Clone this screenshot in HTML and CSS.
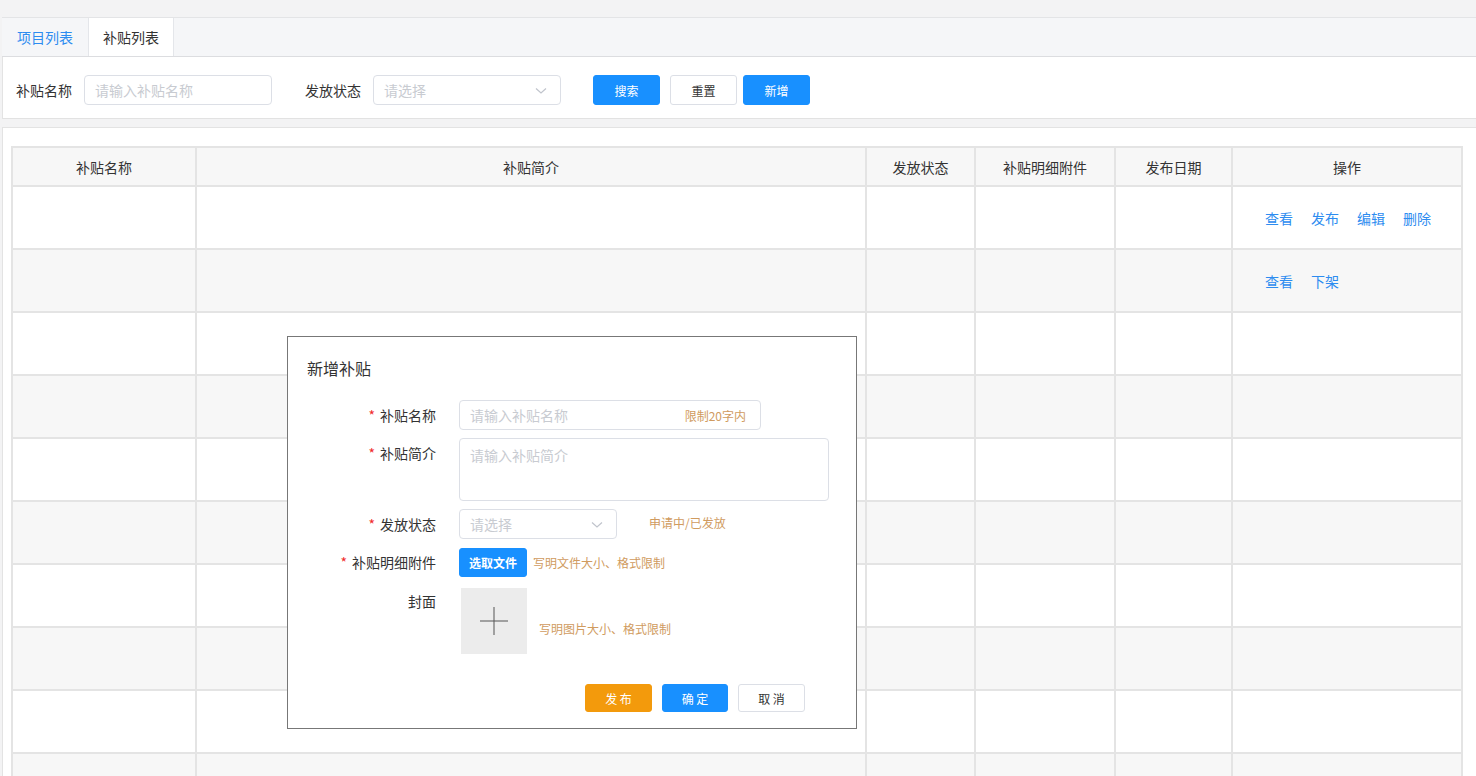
FILE: index.html
```html
<!DOCTYPE html>
<html lang="zh">
<head>
<meta charset="utf-8">
<title>补贴列表</title>
<link rel="stylesheet" href="styles.css">
</head>
<body>
<div class="page">
  <div class="tabs">
    <div class="tab tab-link">项目列表</div>
    <div class="tab tab-active">补贴列表</div>
  </div>

  <div class="search-panel">
    <span class="s-label">补贴名称</span>
    <div class="s-input"><span class="ph">请输入补贴名称</span></div>
    <span class="s-label s-label-2">发放状态</span>
    <div class="s-input s-select"><span class="ph">请选择</span>
      <svg class="chev" width="12" height="8" viewBox="0 0 12 8"><polyline points="1,1.5 6,6 11,1.5" fill="none" stroke="#c0c4cc" stroke-width="1.2"/></svg>
    </div>
    <div class="btns">
      <button class="btn btn-blue">搜索</button>
      <button class="btn btn-white">重置</button>
      <button class="btn btn-blue btn-add">新增</button>
    </div>
  </div>

  <div class="table-panel">
    <table class="grid">
      <colgroup>
        <col class="c1"><col class="c2"><col class="c3"><col class="c4"><col class="c5"><col class="c6">
      </colgroup>
      <thead>
        <tr><th>补贴名称</th><th>补贴简介</th><th>发放状态</th><th>补贴明细附件</th><th>发布日期</th><th>操作</th></tr>
      </thead>
      <tbody>
        <tr><td></td><td></td><td></td><td></td><td></td><td class="ops"><a>查看</a><a>发布</a><a>编辑</a><a>删除</a></td></tr>
        <tr><td></td><td></td><td></td><td></td><td></td><td class="ops"><a>查看</a><a>下架</a></td></tr>
        <tr><td></td><td></td><td></td><td></td><td></td><td></td></tr>
        <tr><td></td><td></td><td></td><td></td><td></td><td></td></tr>
        <tr><td></td><td></td><td></td><td></td><td></td><td></td></tr>
        <tr><td></td><td></td><td></td><td></td><td></td><td></td></tr>
        <tr><td></td><td></td><td></td><td></td><td></td><td></td></tr>
        <tr><td></td><td></td><td></td><td></td><td></td><td></td></tr>
        <tr><td></td><td></td><td></td><td></td><td></td><td></td></tr>
        <tr><td></td><td></td><td></td><td></td><td></td><td></td></tr>
      </tbody>
    </table>
  </div>

  <div class="modal">
    <div class="m-title">新增补贴</div>
    <div class="form">
      <div class="f-row">
        <label class="f-label"><span class="req">*</span>补贴名称</label>
        <div class="f-input f-name"><span class="ph">请输入补贴名称</span><span class="suffix">限制20字内</span></div>
      </div>
      <div class="f-row">
        <label class="f-label"><span class="req">*</span>补贴简介</label>
        <div class="f-textarea"><span class="ph">请输入补贴简介</span></div>
      </div>
      <div class="f-row">
        <label class="f-label"><span class="req">*</span>发放状态</label>
        <div class="f-input f-select"><span class="ph">请选择</span>
          <svg class="chev" width="12" height="8" viewBox="0 0 12 8"><polyline points="1,1.5 6,6 11,1.5" fill="none" stroke="#c0c4cc" stroke-width="1.2"/></svg>
        </div>
        <span class="hint hint-status">申请中/已发放</span>
      </div>
      <div class="f-row f-row-file">
        <label class="f-label"><span class="req">*</span>补贴明细附件</label>
        <button class="btn btn-blue btn-file">选取文件</button>
        <span class="hint hint-file">写明文件大小、格式限制</span>
      </div>
      <div class="f-row f-row-cover">
        <label class="f-label f-label-cover">封面</label>
        <div class="upload">
          <svg width="30" height="30" viewBox="0 0 30 30"><line x1="1" y1="15" x2="29" y2="15" stroke="#555" stroke-width="1"/><line x1="15" y1="1" x2="15" y2="29" stroke="#555" stroke-width="1"/></svg>
        </div>
        <span class="hint hint-cover">写明图片大小、格式限制</span>
      </div>
    </div>
    <div class="m-footer">
      <button class="btn btn-orange">发 布</button>
      <button class="btn btn-blue">确 定</button>
      <button class="btn btn-white">取 消</button>
    </div>
  </div>
</div>
</body>
</html>
```

FILE: styles.css
```css
html, body {
  margin: 0;
  padding: 0;
  overflow: hidden;
}
body {
  background: #f3f3f4;
  font-family: "Noto Sans CJK SC", "Noto Sans", sans-serif;
  color: #333;
  font-size: 14px;
}
.page {
  position: relative;
  width: 1476px;
  height: 776px;
  padding-top: 17px;
  box-sizing: border-box;
}

/* tabs */
.tabs {
  display: flex;
  height: 38px;
  margin-left: 2px;
  background: #f5f6f8;
  border-top: 1px solid #e3e4e6;
  border-bottom: 1px solid #dcdde0;
}
.tab {
  width: 86px;
  display: flex;
  align-items: center;
  justify-content: center;
  font-size: 14px;
  box-sizing: border-box;
}
.tab-link { color: #2d8cf0; }
.tab-active {
  background: #fff;
  color: #333;
  border-left: 1px solid #e4e6ea;
  border-right: 1px solid #e4e6ea;
}

/* search panel */
.search-panel {
  display: flex;
  align-items: flex-start;
  height: 62px;
  margin-left: 2px;
  padding: 18px 0 0 13px;
  background: #fff;
  border-left: 1px solid #e3e3e3;
  border-bottom: 1px solid #e2e2e2;
  box-sizing: border-box;
}
.s-label { font-size: 14px; color: #333; margin-right: 12px; line-height: 30px; }
.s-label-2 { margin-left: 33px; }
.s-input {
  position: relative;
  width: 188px;
  height: 30px;
  border: 1px solid #dcdfe6;
  border-radius: 4px;
  box-sizing: border-box;
  display: flex;
  align-items: center;
  padding-left: 10px;
}
.ph { color: #c8cbd1; font-size: 14px; }
.chev { position: absolute; right: 13px; top: 11px; }
.btns { display: flex; margin-left: 32px; }
.btn {
  height: 30px;
  width: 67px;
  border-radius: 3px;
  font-family: "Noto Sans CJK SC", "Noto Sans", sans-serif;
  font-size: 12px;
  border: 1px solid transparent;
  padding: 0;
  box-sizing: border-box;
  cursor: pointer;
}
.btn-blue { background: #1890ff; color: #fff; border-color: #1890ff; }
.btn-white { background: #fff; color: #333; border-color: #dcdfe6; margin-left: 10px; }
.btn-add { margin-left: 6px; }
.btn-orange { background: #f39a0c; color: #fff; border-color: #f39a0c; }

/* table panel */
.table-panel {
  margin-top: 8px;
  margin-left: 2px;
  padding: 18px 0 0 8px;
  background: #fff;
  border-top: 1px solid #e3e3e3;
  border-left: 1px solid #e3e3e3;
  height: 700px;
  box-sizing: border-box;
}
.grid {
  border-collapse: collapse;
  table-layout: fixed;
  width: 1450px;
}
.c1 { width: 184px; }
.c2 { width: 670px; }
.c3 { width: 109px; }
.c4 { width: 140px; }
.c5 { width: 117px; }
.c6 { width: 230px; }
.grid th, .grid td {
  border: 2px solid #e4e4e4;
  padding: 0;
}
.grid th {
  height: 37px;
  background: #f7f7f7;
  font-weight: normal;
  font-size: 14px;
  color: #333;
}
.grid td { height: 61px; }
.grid tbody tr:nth-child(even) td { background: #f7f7f7; }
.ops { padding-left: 32px !important; }
.ops a {
  color: #2d8cf0;
  font-size: 14px;
  margin-right: 18px;
}

/* modal */
.modal {
  position: absolute;
  left: 287px;
  top: 336px;
  width: 570px;
  height: 393px;
  background: #fff;
  border: 1px solid #777;
  box-sizing: border-box;
}
.m-title {
  font-size: 16px;
  color: #333;
  padding: 19px 0 0 19px;
  line-height: 24px;
}
.form { margin-top: 20px; display: flex; flex-direction: column; }
.f-row { display: flex; align-items: flex-start; margin-bottom: 8px; }
.f-label {
  width: 148px;
  margin-right: 23px;
  text-align: right;
  line-height: 30px;
  font-size: 14px;
  color: #333;
  flex: none;
}
.req { color: #f02b2b; margin-right: 5px; }
.f-input {
  position: relative;
  height: 30px;
  border: 1px solid #dcdfe6;
  border-radius: 4px;
  box-sizing: border-box;
  display: flex;
  align-items: center;
  padding-left: 10px;
}
.f-name { width: 302px; }
.suffix {
  position: absolute;
  right: 14px;
  font-size: 12px;
  color: #d09b60;
}
.f-textarea {
  width: 370px;
  height: 63px;
  border: 1px solid #dcdfe6;
  border-radius: 4px;
  box-sizing: border-box;
  padding: 6px 10px;
}
.f-select { width: 158px; }
.hint { font-size: 12px; color: #d09b60; }
.hint-status { margin-left: 32px; line-height: 28px; }
.f-row-file { margin-top: 1px; margin-bottom: 11px; align-items: center; }
.f-row-file .f-label { line-height: 29px; }
.btn-file { width: 68px; height: 29px; font-weight: bold; }
.hint-file { margin-left: 6px; }
.f-row-cover { align-items: flex-start; }
.f-label-cover { line-height: 26px; }
.upload {
  width: 66px;
  height: 66px;
  margin-left: 2px;
  background: #ececec;
  display: flex;
  align-items: center;
  justify-content: center;
}
.hint-cover { margin-left: 12px; margin-top: 32px; }
.m-footer {
  display: flex;
  justify-content: flex-end;
  padding-right: 51px;
  margin-top: 22px;
}
.m-footer .btn { height: 28px; width: 67px; margin-left: 10px; }
.m-footer .btn-blue { width: 66px; }
```
